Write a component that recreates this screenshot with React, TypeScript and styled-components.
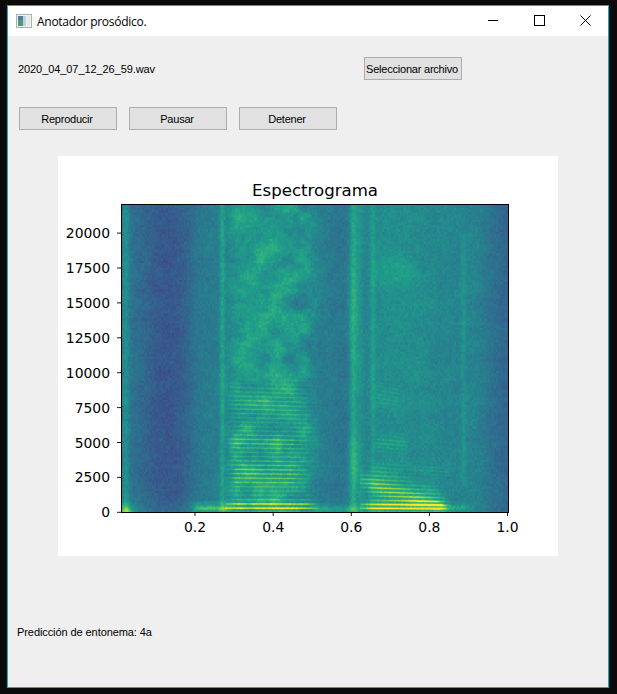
import React, { useEffect, useRef } from "react"
import styled, { createGlobalStyle } from "styled-components"

const GlobalStyle = createGlobalStyle`
  html, body {
    margin: 0;
    padding: 0;
    height: 100%;
    background: #0a0a0a;
  }
`

const Screen = styled("div")`
  width: 617px;
  height: 694px;
  padding: 5px 0 0 7px;
  box-sizing: border-box;
  overflow: hidden;
`

const Window = styled("div")`
  width: 602px;
  height: 683px;
  box-sizing: border-box;
  border: 1px solid #00b7c3;
  background: #efefef;
  display: flex;
  flex-direction: column;
`

const TitleBar = styled("div")`
  height: 30px;
  flex: none;
  background: #ffffff;
  display: flex;
  align-items: center;
  padding-left: 8px;
`

const TitleText = styled("span")`
  font-family: "Open Sans", sans-serif;
  font-size: 12px;
  letter-spacing: -0.28px;
  color: #000000;
  margin-left: 5px;
  flex: 1;
`

const WindowButton = styled("div")`
  width: 46px;
  height: 30px;
  display: flex;
  align-items: center;
  justify-content: center;
  margin-top: -2px;
`

const Content = styled("div")`
  flex: 1;
  display: flex;
  flex-direction: column;
`

const FileRow = styled("div")`
  display: grid;
  grid-template-columns: 346px 98px;
  align-items: center;
  margin: 21px 0 0 10px;
`

const Label = styled("span")`
  font-family: "Liberation Sans", Arial, sans-serif;
  font-size: 11px;
  letter-spacing: -0.08px;
  color: #000000;
`

const Button = styled("button")`
  width: 98px;
  height: 23px;
  box-sizing: border-box;
  padding: 0 2px 0 0;
  border: 1px solid #adadad;
  background: #e1e1e1;
  color: #000000;
  font-family: "Liberation Sans", Arial, sans-serif;
  font-size: 11px;
  letter-spacing: -0.22px;
`

const ButtonRow = styled("div")`
  display: flex;
  gap: 12px;
  margin: 27px 0 0 11px;
`

const Figure = styled("div")`
  position: relative;
  width: 500px;
  height: 400px;
  margin: 26px 0 0 50px;
  background: #ffffff;
`

const Heatmap = styled("canvas")`
  position: absolute;
  left: 64px;
  top: 49px;
  width: 386px;
  height: 307px;
`

const Status = styled("div")`
  margin: 68px 0 0 9px;
  line-height: 14px;
`

const AxisText = styled("text")`
  font-family: "DejaVu Sans", sans-serif;
  font-size: 13.9px;
  fill: #000000;
`

const TitleLabel = styled("text")`
  font-family: "DejaVu Sans", sans-serif;
  font-size: 16.6px;
  fill: #000000;
`

const FigureSvg = styled("svg")`
  display: block;
`

const viridisStops = [
  [68, 1, 84],
  [72, 40, 120],
  [62, 74, 137],
  [49, 104, 142],
  [38, 130, 142],
  [31, 158, 137],
  [53, 183, 121],
  [109, 205, 89],
  [180, 222, 44],
  [253, 231, 37],
]

const viridis = (v: number) => {
  const p = Math.min(0.9999, Math.max(0, v)) * (viridisStops.length - 1)
  const i = Math.floor(p)
  const k = p - i
  return viridisStops[i].map((c, n) => c + (viridisStops[i + 1][n] - c) * k)
}

const gauss = (x: number, c: number, s: number) => Math.exp(-((x - c) * (x - c)) / (2 * s * s))
const band = (x: number, a: number, b: number, edge: number) =>
  Math.min(1, Math.max(0, (x - a) / edge + 0.5)) * Math.min(1, Math.max(0, (b - x) / edge + 0.5))

let seed = 12345
const rand = () => {
  seed = (seed * 1664525 + 1013904223) % 4294967296
  return seed / 4294967296
}

const makeGrid = (w: number, h: number) => {
  const g: number[] = []
  for (let i = 0; i < w * h; i++) g.push(rand())
  return (x: number, y: number) => {
    const xi = Math.floor(x)
    const yi = Math.floor(y)
    const fx = x - xi
    const fy = y - yi
    const sx = fx * fx * (3 - 2 * fx)
    const sy = fy * fy * (3 - 2 * fy)
    const at = (a: number, b: number) => g[((a % w) + w) % w + (((b % h) + h) % h) * w]
    return (
      (at(xi, yi) * (1 - sx) + at(xi + 1, yi) * sx) * (1 - sy) +
      (at(xi, yi + 1) * (1 - sx) + at(xi + 1, yi + 1) * sx) * sy
    )
  }
}

// t runs 0.0125-1.0, f in kHz
const spectrum = (t: number, f: number, blob: number, fine: number) => {
  let v = 0.43 + (blob - 0.5) * 0.06
  v += 0.03 * band(t, 0.63, 0.94, 0.06)

  // silence at the start
  v -= 0.13 * gauss(t, 0.125, 0.05)
  v -= 0.03 * band(t, 0.03, 0.19, 0.02)
  v += 0.08 * gauss(t, 0.022, 0.006)
  v += 0.38 * gauss(t, 0.02, 0.012) * gauss(f, 0, 0.4)

  // plosive and first voiced part
  v += 0.13 * gauss(t, 0.268, 0.005)
  const voiced1 = band(t, 0.285, 0.5, 0.04)
  v += voiced1 * (0.06 + (blob - 0.42) * 0.17)
  v += 0.04 * band(t, 0.28, 0.44, 0.05) * gauss(f, 15, 6)
  v -= 0.04 * gauss(t, 0.57, 0.025)

  // bursts around 0.6 and 0.65
  v += 0.15 * gauss(t, 0.603, 0.007) + 0.06 * gauss(t, 0.62, 0.007)
  v += 0.1 * gauss(t, 0.653, 0.005) * gauss(f, 14, 9)
  v += 0.1 * gauss(t, 0.605, 0.009) * gauss(f, 3.7, 1.3)
  v += 0.06 * gauss(t, 0.605, 0.01) * gauss(f, 15, 3)

  // tail
  v += 0.07 * gauss(t, 0.885, 0.005) * band(f, 2, 20, 0.6)
  v += 0.03 * band(t, 0.66, 0.87, 0.05) * gauss(f, 13, 9)
  v += 0.06 * band(t, 0.66, 0.76, 0.04) * gauss(f, 17.2, 0.9)
  v -= 0.1 * band(t, 0.95, 1.06, 0.08)
  v -= 0.03 * band(t, 0.8, 0.9, 0.05) * gauss(f, 12, 10)

  // low band between syllables
  v += 0.1 * band(t, 0.19, 0.29, 0.02) * band(f, 0, 0.8, 0.2)
  v += 0.2 * band(t, 0.2, 0.29, 0.02) * gauss(f, 0.3, 0.12)
  v += 0.06 * band(t, 0.03, 0.2, 0.03) * gauss(f, 0, 0.9)
  v += 0.16 * band(t, 0.5, 0.62, 0.02) * gauss(f, 0.25, 0.2)

  // harmonics
  const h = (f0: number, width: number) => {
    const r = f / f0
    const d = r - Math.round(r)
    return gauss(d, 0, width)
  }
  if (t > 0.275 && t < 0.56) {
    const f0 = 0.31 - 0.03 * (t - 0.3)
    const front = band(t, 0.28, 0.47, 0.04)
    const env =
      voiced1 *
      (0.06 * band(f, 0, 9.5, 1) +
        0.42 * gauss(f, 0.4, 0.32) +
        0.2 * gauss(f, 2.9, 0.7) * front +
        0.16 * gauss(f, 5.1, 0.45) * front +
        0.09 * gauss(f, 7.6, 0.7) * front)
    v += env * (h(f0, 0.16) * 0.95 + 0.14)
  }
  if (t > 0.62 && t < 0.88) {
    const f0 = 0.3 - 0.16 * (t - 0.62)
    const u = (t - 0.62) / 0.2
    const ridge = gauss(f, 2.3 - 1.9 * u, 0.45) * band(t, 0.62, 0.83, 0.03)
    const low = gauss(f, 0.4, 0.28) * band(t, 0.625, 0.84, 0.03)
    const env =
      0.24 * ridge +
      0.4 * low +
      0.12 * band(f, 0, 3.6 - 1.8 * u, 0.6) * band(t, 0.65, 0.83, 0.03) +
      0.11 * gauss(f, 5, 0.4) * band(t, 0.66, 0.74, 0.02) +
      0.07 * gauss(f, 8.2, 0.7) * band(t, 0.66, 0.72, 0.02) +
      0.08 * gauss(f, 3.3 - (t - 0.68) * 2, 0.3) * band(t, 0.66, 0.85, 0.03)
    v += env * (h(f0, 0.19) * 0.85 + 0.28)
  }
  v += 0.14 * band(t, 0.83, 0.9, 0.03) * gauss(f, 0.35, 0.16)

  return v + (fine - 0.5) * 0.085
}

const Spectrogram: React.FC = () => {
  const ref = useRef<HTMLCanvasElement>(null)

  useEffect(() => {
    const canvas = ref.current
    if (!canvas) return
    const ctx = canvas.getContext("2d")
    if (!ctx) return
    const w = canvas.width
    const h = canvas.height
    seed = 12345
    const blobs = makeGrid(64, 64)
    const cols = 220
    const rows = 129
    const fine: number[] = []
    for (let i = 0; i < cols * rows; i++) fine.push(rand() * 0.65 + rand() * 0.35)
    const image = ctx.createImageData(w, h)
    for (let y = 0; y < h; y++) {
      const f = ((h - y) / h) * 22.05
      const row = Math.floor((f / 22.05) * (rows - 1))
      for (let x = 0; x < w; x++) {
        const t = 0.0125 + (x / w) * 0.9875
        const col = Math.floor((x / w) * cols)
        const blob = blobs(x / 14, y / 14) * 0.65 + blobs(x / 6 + 20, y / 5 + 20) * 0.35
        const n = fine[col + row * cols]
        const [r, g, b] = viridis(spectrum(t, f, blob, n))
        const p = (x + y * w) * 4
        image.data[p] = r
        image.data[p + 1] = g
        image.data[p + 2] = b
        image.data[p + 3] = 255
      }
    }
    ctx.putImageData(image, 0, 0)
  }, [])

  return <Heatmap ref={ref} width={386} height={307} />
}

const xTicks = [
  { x: 137, label: "0.2" },
  { x: 215.2, label: "0.4" },
  { x: 293.3, label: "0.6" },
  { x: 371.4, label: "0.8" },
  { x: 449.5, label: "1.0" },
]

const yTicks = [0, 2500, 5000, 7500, 10000, 12500, 15000, 17500, 20000].map((value, i) => ({
  value,
  y: 356.3 - i * 34.9,
}))

const Plot: React.FC = () => (
  <Figure>
    <FigureSvg width="500" height="400" viewBox="0 0 500 400">
      <TitleLabel x="257" y="40" textAnchor="middle">
        Espectrograma
      </TitleLabel>
      {xTicks.map(({ x, label }) => (
        <g key={label}>
          <line x1={x} x2={x} y1="356" y2="360" stroke="#000" strokeWidth="0.9" />
          <AxisText x={x} y="376" textAnchor="middle">
            {label}
          </AxisText>
        </g>
      ))}
      {yTicks.map(({ value, y }) => (
        <g key={value}>
          <line x1="59" x2="63.5" y1={y} y2={y} stroke="#000" strokeWidth="0.9" />
          <AxisText x="52" y={y + 5} textAnchor="end">
            {value}
          </AxisText>
        </g>
      ))}
      <rect x="63.5" y="48.5" width="387" height="308" fill="none" stroke="#000" strokeWidth="1" />
    </FigureSvg>
    <Spectrogram />
  </Figure>
)

const AppIcon = () => (
  <svg width="16" height="14" viewBox="0 0 16 14">
    <rect x="0.5" y="0.5" width="15" height="13" fill="#f2f2f2" stroke="#a9b0b5" />
    <rect x="2" y="2" width="5" height="10" fill="#4a9a7e" />
    <rect x="2" y="2" width="5" height="4" fill="#4f7f9c" />
    <rect x="7" y="2" width="3" height="10" fill="#c4d0d6" />
    <rect x="11" y="2" width="3" height="10" fill="#e4e8ea" />
  </svg>
)

const App: React.FC = () => (
  <Screen>
    <GlobalStyle />
    <Window>
      <TitleBar>
        <AppIcon />
        <TitleText>Anotador prosódico.</TitleText>
        <WindowButton>
          <svg width="10" height="10" viewBox="0 0 10 10">
            <line x1="0" x2="10" y1="5.5" y2="5.5" stroke="#000" />
          </svg>
        </WindowButton>
        <WindowButton>
          <svg width="11" height="11" viewBox="0 0 11 11">
            <rect x="0.5" y="0.5" width="10" height="10" fill="none" stroke="#000" />
          </svg>
        </WindowButton>
        <WindowButton>
          <svg width="11" height="11" viewBox="0 0 11 11">
            <path d="M0.5 0.5 L10.5 10.5 M10.5 0.5 L0.5 10.5" stroke="#000" fill="none" />
          </svg>
        </WindowButton>
      </TitleBar>
      <Content>
        <FileRow>
          <Label>2020_04_07_12_26_59.wav</Label>
          <Button>Seleccionar archivo</Button>
        </FileRow>
        <ButtonRow>
          <Button>Reproducir</Button>
          <Button>Pausar</Button>
          <Button>Detener</Button>
        </ButtonRow>
        <Plot />
        <Status>
          <Label>Predicción de entonema: 4a</Label>
        </Status>
      </Content>
    </Window>
  </Screen>
)

export default App
